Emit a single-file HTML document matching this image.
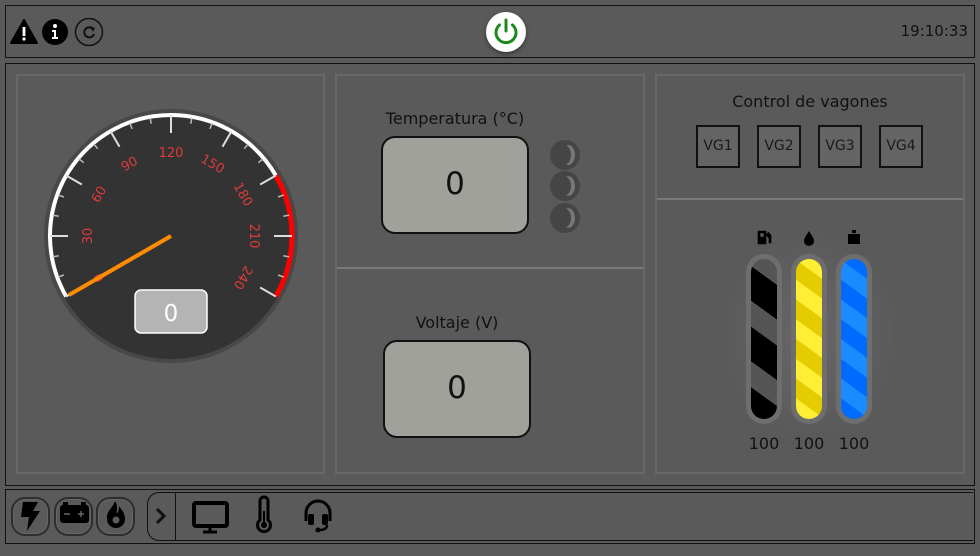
<!DOCTYPE html>
<html><head><meta charset="utf-8"><style>
*{margin:0;padding:0;box-sizing:border-box}
body{width:980px;height:556px;background:#5a5a5a;font-family:"DejaVu Sans","Liberation Sans",sans-serif;color:#111;position:relative;overflow:hidden}
.a{position:absolute}
.bx{border:1px solid #111}
.pn{position:absolute;border:2px solid #686868}
.vg{position:absolute;top:125px;width:44px;height:43px;border:2px solid #111;background:#646464;font-size:14px;text-align:center;line-height:39px;color:#1a1a1a}
.rd{position:absolute;background:#a0a19b;border:2px solid #111;border-radius:14px;font-size:31px;text-align:center}
.lbl{position:absolute;font-size:16px;text-align:center}
.moon{position:absolute;left:550px;width:30px;height:30px;border-radius:50%;background:#454545}
.moon:after{content:"";position:absolute;left:7px;top:5px;width:14px;height:20px;border-radius:50%;box-shadow:4px 0 0 0 #777}
.btn{position:absolute;top:497px;width:39px;height:39px;border:2px solid #2e2e2e;border-radius:14px;box-shadow:inset 0 0 0 1px #666}
.tube{position:absolute;top:254px;width:36px;height:170px;border-radius:18px;background:#6e6e6e}
.in{position:absolute;left:5px;top:5px;width:26px;height:160px;border-radius:13px}
</style></head><body>
<div class="a bx" style="left:5px;top:5px;width:970px;height:53px"></div>
<svg class="a" style="left:10px;top:18px" width="100" height="30" viewBox="0 0 100 30">
<path d="M14 2 L27 25 H1 Z" fill="#000" stroke="#000" stroke-width="2" stroke-linejoin="round"/>
<rect x="12.6" y="9" width="2.8" height="9" fill="#fff"/><circle cx="14" cy="21" r="1.6" fill="#fff"/>
<circle cx="45" cy="14" r="13" fill="#000"/><circle cx="45" cy="8" r="2" fill="#fff"/><path d="M42 12 H46 V19 H48 V21 H42 V19 H44 V14 H42Z" fill="#fff"/>
<circle cx="79" cy="14" r="13.5" fill="none" stroke="#111" stroke-width="1.5"/>
<path d="M83 11 A5 5 0 1 0 84 16" fill="none" stroke="#111" stroke-width="2"/><path d="M80 8 L85 10 L83 14Z" fill="#111"/>
</svg>
<div class="a" style="left:486px;top:12px;width:40px;height:40px;border-radius:50%;background:#fff;box-shadow:0 2px 4px rgba(0,0,0,.4)"></div>
<svg class="a" style="left:486px;top:12px" width="40" height="40" viewBox="0 0 40 40"><path d="M13.5 13 A10 10 0 1 0 26.5 13" fill="none" stroke="#1a8a1a" stroke-width="3" stroke-linecap="round"/><line x1="20" y1="8" x2="20" y2="19" stroke="#1a8a1a" stroke-width="3" stroke-linecap="round"/></svg>
<div class="a" style="left:870px;top:22px;width:98px;text-align:right;font-size:15px">19:10:33</div>

<div class="a bx" style="left:5px;top:63px;width:970px;height:423px"></div>
<div class="pn" style="left:16px;top:74px;width:309px;height:400px"></div>
<div class="pn" style="left:335px;top:74px;width:310px;height:400px"></div>
<div class="a" style="left:337px;top:267px;width:306px;height:2px;background:#7a7a7a"></div>
<div class="pn" style="left:655px;top:74px;width:310px;height:400px"></div>
<div class="a" style="left:657px;top:198px;width:306px;height:2px;background:#7a7a7a"></div>

<svg class="a" style="left:0;top:0" width="330" height="480">
<circle cx="171" cy="236" r="127" fill="#484848"/>
<circle cx="171" cy="236" r="123" fill="#333"/>
<path d="M66.2 296.5 A121 121 0 0 1 275.8 175.5" fill="none" stroke="#fff" stroke-width="4"/>
<path d="M275.8 175.5 A121 121 0 0 1 275.8 296.5" fill="none" stroke="#f00" stroke-width="5"/>
<g stroke="#ddd" stroke-width="2">
<line x1="292" y1="236" x2="274" y2="236" transform="rotate(150 171 236)"/>
<line x1="292" y1="236" x2="274" y2="236" transform="rotate(180 171 236)"/>
<line x1="292" y1="236" x2="274" y2="236" transform="rotate(210 171 236)"/>
<line x1="292" y1="236" x2="274" y2="236" transform="rotate(240 171 236)"/>
<line x1="292" y1="236" x2="274" y2="236" transform="rotate(270 171 236)"/>
<line x1="292" y1="236" x2="274" y2="236" transform="rotate(300 171 236)"/>
<line x1="292" y1="236" x2="274" y2="236" transform="rotate(330 171 236)"/>
<line x1="292" y1="236" x2="274" y2="236" transform="rotate(360 171 236)"/>
<line x1="292" y1="236" x2="274" y2="236" transform="rotate(390 171 236)"/>
</g>
<g stroke="#bbb" stroke-width="1.5">
<line x1="291" y1="236" x2="285" y2="236" transform="rotate(160 171 236)"/><line x1="291" y1="236" x2="285" y2="236" transform="rotate(170 171 236)"/>
<line x1="291" y1="236" x2="285" y2="236" transform="rotate(190 171 236)"/><line x1="291" y1="236" x2="285" y2="236" transform="rotate(200 171 236)"/>
<line x1="291" y1="236" x2="285" y2="236" transform="rotate(220 171 236)"/><line x1="291" y1="236" x2="285" y2="236" transform="rotate(230 171 236)"/>
<line x1="291" y1="236" x2="285" y2="236" transform="rotate(250 171 236)"/><line x1="291" y1="236" x2="285" y2="236" transform="rotate(260 171 236)"/>
<line x1="291" y1="236" x2="285" y2="236" transform="rotate(280 171 236)"/><line x1="291" y1="236" x2="285" y2="236" transform="rotate(290 171 236)"/>
<line x1="291" y1="236" x2="285" y2="236" transform="rotate(310 171 236)"/><line x1="291" y1="236" x2="285" y2="236" transform="rotate(320 171 236)"/>
<line x1="291" y1="236" x2="285" y2="236" transform="rotate(340 171 236)"/><line x1="291" y1="236" x2="285" y2="236" transform="rotate(350 171 236)"/>
<line x1="291" y1="236" x2="285" y2="236" transform="rotate(370 171 236)"/><line x1="291" y1="236" x2="285" y2="236" transform="rotate(380 171 236)"/>
</g>
<g fill="#e03a3a" font-size="13" font-family="DejaVu Sans,sans-serif" text-anchor="middle">
<g transform="rotate(150 171 236)"><text x="255" y="236" dy="5" transform="rotate(90 255 236)">0</text></g>
<g transform="rotate(180 171 236)"><text x="255" y="236" dy="5" transform="rotate(90 255 236)">30</text></g>
<g transform="rotate(210 171 236)"><text x="255" y="236" dy="5" transform="rotate(90 255 236)">60</text></g>
<g transform="rotate(240 171 236)"><text x="255" y="236" dy="5" transform="rotate(90 255 236)">90</text></g>
<g transform="rotate(270 171 236)"><text x="255" y="236" dy="5" transform="rotate(90 255 236)">120</text></g>
<g transform="rotate(300 171 236)"><text x="255" y="236" dy="5" transform="rotate(90 255 236)">150</text></g>
<g transform="rotate(330 171 236)"><text x="255" y="236" dy="5" transform="rotate(90 255 236)">180</text></g>
<g transform="rotate(360 171 236)"><text x="255" y="236" dy="5" transform="rotate(90 255 236)">210</text></g>
<g transform="rotate(390 171 236)"><text x="255" y="236" dy="5" transform="rotate(90 255 236)">240</text></g>
</g>
<line x1="171" y1="236" x2="69" y2="295" stroke="#ff8c00" stroke-width="4"/>
<rect x="135" y="290" width="72" height="43" rx="6" fill="#b4b4b4" stroke="#fff" stroke-width="1.5"/>
<text x="171" y="321" fill="#fff" font-size="23" text-anchor="middle" font-family="DejaVu Sans,sans-serif">0</text>
</svg>

<div class="lbl" style="left:355px;top:109px;width:200px">Temperatura (°C)</div>
<div class="rd" style="left:381px;top:136px;width:148px;height:98px;line-height:92px">0</div>
<div class="moon" style="top:140px"></div><div class="moon" style="top:171px"></div><div class="moon" style="top:203px"></div>
<div class="lbl" style="left:357px;top:313px;width:200px">Voltaje (V)</div>
<div class="rd" style="left:383px;top:340px;width:148px;height:98px;line-height:92px">0</div>

<div class="lbl" style="left:660px;top:92px;width:300px">Control de vagones</div>
<div class="vg" style="left:696px">VG1</div><div class="vg" style="left:757px">VG2</div><div class="vg" style="left:818px">VG3</div><div class="vg" style="left:879px">VG4</div>

<div class="a" style="left:720px;top:230px;width:180px;height:210px;background:radial-gradient(ellipse at center,#676767 0%,#5a5a5a 70%)"></div>
<div class="tube" style="left:746px"><div class="in" style="background:repeating-linear-gradient(216deg,#555 0px,#555 21px,#000 21px,#000 49px)"></div></div>
<div class="tube" style="left:791px"><div class="in" style="background:repeating-linear-gradient(216deg,#ffee33 0px,#ffee33 16px,#e5cc00 16px,#e5cc00 32px)"></div></div>
<div class="tube" style="left:836px"><div class="in" style="background:repeating-linear-gradient(216deg,#006cff 0px,#006cff 16px,#1a8cff 16px,#1a8cff 32px)"></div></div>
<svg class="a" style="left:740px;top:225px" width="140" height="30">
<path d="M18 6 h8 v13 h-8z M20 8 v4 h4 v-4z M26 10 l3 3 v5 h2 v-8 l-3 -3" fill="#000" stroke="#000" stroke-width="0.6"/>
<path d="M69 6 C66 11 64 13 64 16 A5 5 0 0 0 74 16 C74 13 72 11 69 6Z" fill="#000"/>
<path d="M112 5 h4 v3 h-4z M109 9 h10 a1 1 0 0 1 1 1 v9 h-12 v-9 a1 1 0 0 1 1 -1z" fill="#000"/>
</svg>
<div class="a" style="left:734px;top:434px;width:60px;text-align:center;font-size:16px">100</div>
<div class="a" style="left:779px;top:434px;width:60px;text-align:center;font-size:16px">100</div>
<div class="a" style="left:824px;top:434px;width:60px;text-align:center;font-size:16px">100</div>

<div class="a bx" style="left:5px;top:489px;width:970px;height:55px"></div>
<div class="btn" style="left:11px"></div><div class="btn" style="left:54px"></div><div class="btn" style="left:96px"></div>
<div class="a" style="left:147px;top:492px;width:30px;height:49px;border:1px solid #111;border-right:none;border-radius:12px 0 0 12px"></div>
<div class="a" style="left:175px;top:492px;width:798px;height:49px;border:1px solid #111;border-right:none"></div>
<svg class="a" style="left:0;top:489px" width="360" height="55">
<path d="M23 13 H38 L33 22 H40 L27 42 L29 28 H21 Z" fill="#000"/>
<rect x="60" y="16" width="29" height="18" rx="3" fill="#000"/><rect x="63" y="13" width="5" height="3" fill="#000"/><rect x="81" y="13" width="5" height="3" fill="#000"/>
<path d="M64 25 h6 M78 25 h6 M81 22 v6" stroke="#666" stroke-width="1.5"/>
<path d="M115 12 C113 19 106 22 107 30 A9 9 0 0 0 125 30 C125 24 121 20 119 17 C119 22 118 24 116 24 C118 20 117 15 115 12Z" fill="#000"/>
<circle cx="116" cy="31" r="3.5" fill="#5a5a5a"/>
<path d="M157 20 L164 27 L157 34" fill="none" stroke="#111" stroke-width="3"/>
<rect x="194" y="14" width="33" height="23" rx="2" fill="none" stroke="#000" stroke-width="4"/><path d="M210 37 v5 M203 43 h14" stroke="#000" stroke-width="3"/>
<path d="M260 12 a4 4 0 0 1 8 0 v19 a6.5 6.5 0 1 1 -8 0z" fill="none" stroke="#000" stroke-width="3"/><circle cx="264" cy="36" r="3" fill="#000"/><path d="M264 22 v12" stroke="#000" stroke-width="2"/>
<path d="M306 32 v-8 a12 12 0 0 1 24 0 v8" fill="none" stroke="#000" stroke-width="3"/>
<rect x="308" y="25" width="6" height="11" rx="2" fill="#000"/><rect x="322" y="25" width="6" height="11" rx="2" fill="#000"/>
<path d="M327 36 q0 5 -8 5" fill="none" stroke="#000" stroke-width="2.5"/><circle cx="318" cy="41" r="2.5" fill="#000"/>
</svg>
</body></html>
